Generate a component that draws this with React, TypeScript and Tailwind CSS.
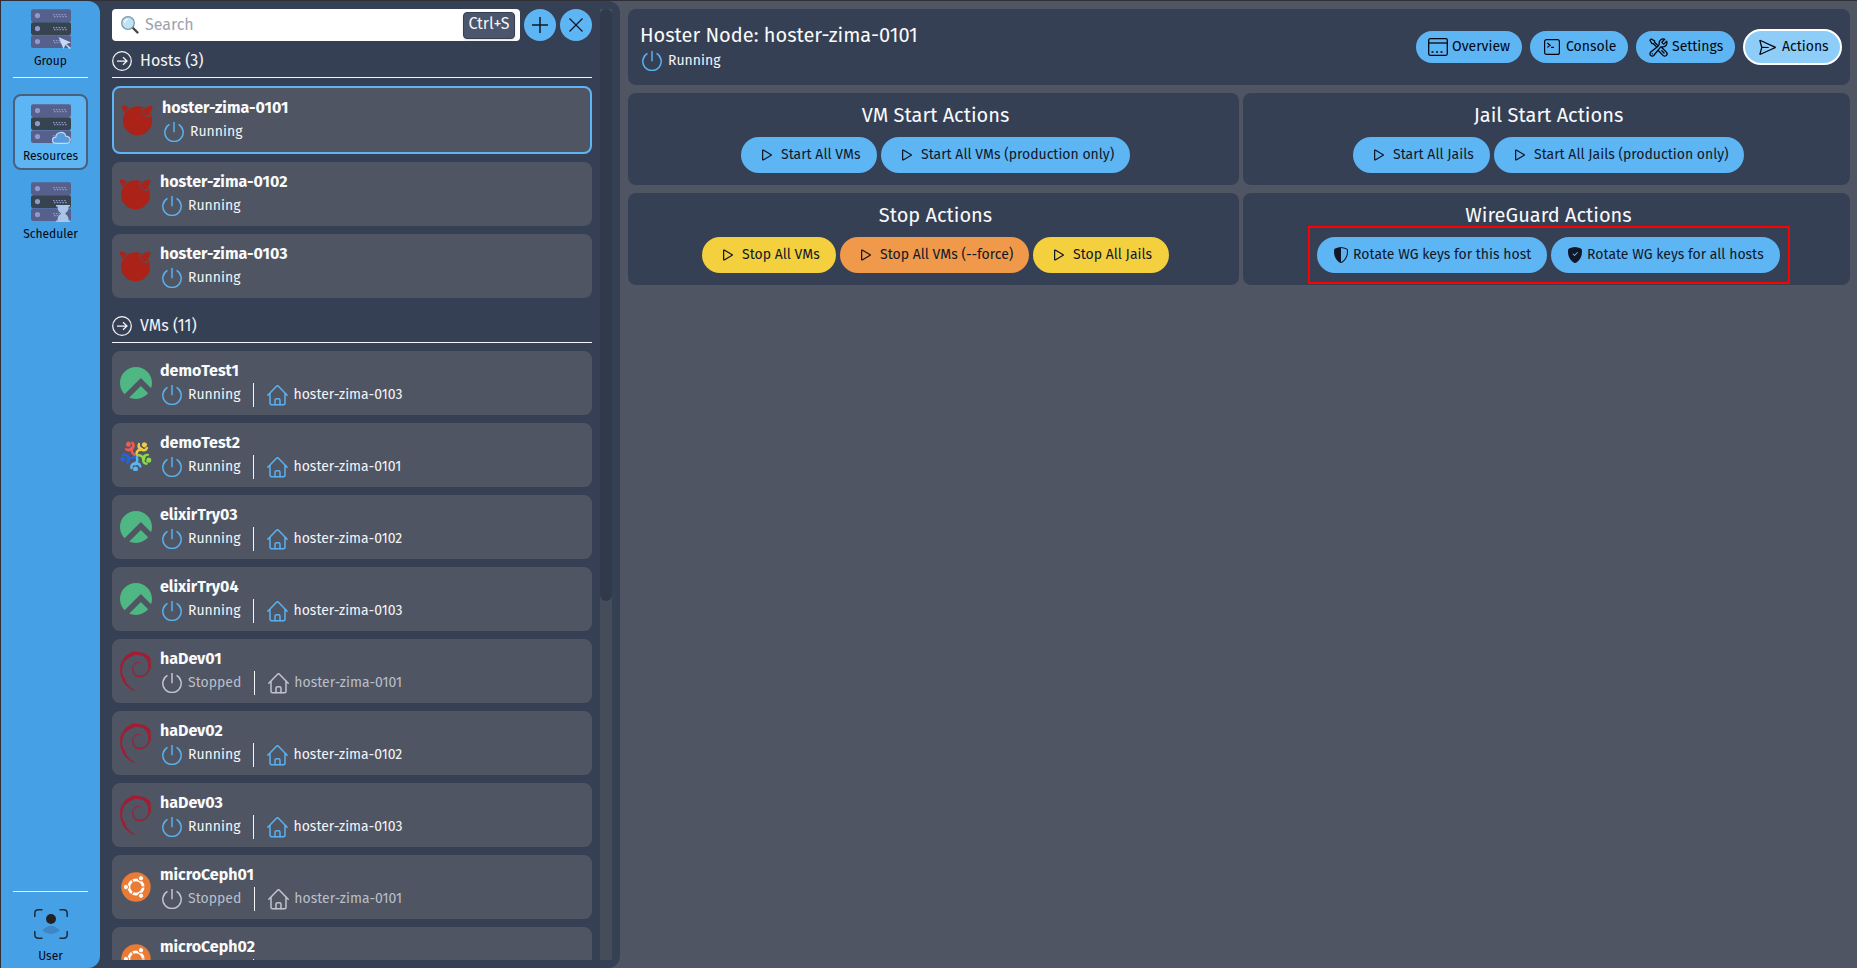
import React, { ReactNode } from "react";
import { HiOutlineWrenchScrewdriver } from "react-icons/hi2";
import { SiDebian, SiFreebsd, SiRockylinux } from "react-icons/si";
import { BsShieldFillCheck, BsShieldShaded, BsPlay } from "react-icons/bs";
import { VscSend } from "react-icons/vsc";

type IconProps = { className?: string };

const Power = ({ className = "" }: IconProps) => (
  <svg viewBox="0 0 20 20" className={className} fill="none" stroke="currentColor" strokeWidth="1.5">
    <path d="M10 0v10.2" />
    <path d="M5.500 2.300A9.200 9.200 0 1 0 14.500 2.300" />
  </svg>
);

const Home = ({ className = "" }: IconProps) => (
  <svg viewBox="0 0 21 21" className={className} fill="none" stroke="currentColor" strokeWidth="1.5" strokeLinecap="round" strokeLinejoin="round">
    <path d="M.8 10.300 9.6 1.200q.9-.9 1.8 0l8.800 9.100M3 8.700v9.600q0 1.500 1.500 1.500h12q1.500 0 1.500-1.500V8.700" />
    <path d="M8 19.700v-4.400q0-1.500 1.500-1.500h2q1.500 0 1.500 1.500v4.400" />
  </svg>
);

const swirl = [
  { color: "#efcb3f", angle: 36 },
  { color: "#8dd94b", angle: 108 },
  { color: "#5cb5f2", angle: 180 },
  { color: "#2a63d4", angle: 252 },
  { color: "#ec5a50", angle: 324 },
];

const AlmaLinux = ({ className = "" }: IconProps) => (
  <svg viewBox="0 0 32 32" className={className}>
    {swirl.map((s) => (
      <g key={s.color} transform={`rotate(${s.angle} 16 16.5)`}>
        <path d="M15.500 15.200C14 12.500 14.500 9.700 17.500 8.500 20.500 7.700 20.900 6 20.500 4" fill="none" stroke={s.color} strokeWidth="2.500" strokeLinecap="round" />
        <path d="M10.500 4.500C10.500 9 14.500 11.500 19 8.800L17.500 6.300C15 7.500 13 7 12.300 4.300z" fill={s.color} />
        <circle cx="16.500" cy="2.900" r="2.500" fill={s.color} />
      </g>
    ))}
  </svg>
);

const Ubuntu = ({ className = "" }: IconProps) => (
  <svg viewBox="0 0 30 30" className={className}>
    <circle cx="15" cy="15" r="14.7" fill="#e97b35" />
    <circle cx="15" cy="15" r="7.2" fill="none" stroke="#fff" strokeWidth="2.8" />
    {[0, 120, 240].map((a) => (
      <g key={a} transform={`rotate(${a} 15 15)`}>
        <path d="M24.500 15H19" stroke="#e97b35" strokeWidth="1.2" />
        <circle cx="4.900" cy="15" r="2.600" fill="#fff" stroke="#e97b35" strokeWidth="1" />
      </g>
    ))}
  </svg>
);

const Freebsd = ({ className = "" }: IconProps) => <SiFreebsd className={`text-[#ab2318] ${className}`} />;
const Rocky = ({ className = "" }: IconProps) => <SiRockylinux className={`text-[#4fb783] ${className}`} />;
const Debian = ({ className = "" }: IconProps) => <SiDebian className={`text-[#a11d33] ${className}`} />;

const ArrowCircle = () => (
  <svg viewBox="0 0 20 20" className="size-5 shrink-0" fill="none" stroke="currentColor" strokeWidth="1.25">
    <circle cx="10" cy="10" r="9.300" />
    <path d="M5 10h9.500M11 6.300l4 3.700-4 3.700" />
  </svg>
);

type Badge = "cursor" | "cloud" | "hourglass";

const Servers = ({ badge }: { badge: Badge }) => (
  <svg viewBox="0 0 40 40" className="size-10">
    {[0, 13, 26].map((y, i) => (
      <g key={y}>
        <rect x="0" y={y + 0.2} width="40" height="12.900" rx="2" fill={i === 1 ? "#37434e" : "#56608a"} />
        <circle cx="6.500" cy={y + 6.600} r="2.600" fill="#9098d2" />
        <path d={`M22 ${y + 5.600}h14M23 ${y + 7.600}h13`} stroke="#9098d2" strokeWidth="1.300" strokeDasharray="1.500 1.300" />
      </g>
    ))}
    {badge === "cursor" && <path d="M27.500 28 40 33.400l-4.700 1.700 4.700 4-1.500 1-4-4.300-2 4.200z" fill="#c3d9f5" />}
    {badge === "cloud" && (
      <path d="M24.500 39.300c-4.300-.5-3.800-6.300.3-6.200.5-5.500 8.500-6.500 10-.9 5.800.5 5.600 6.900.8 7.100z" fill="#559bdd" stroke="#c3d9f5" strokeWidth="1.200" />
    )}
    {badge === "hourglass" && (
      <path d="M25 23h14v1.500H25zM25 38.500h14V40H25zM26.500 24.500h11.200c0 4-1.700 5.500-4 7 2.300 1.500 4 3 4 7H26.500c0-4 1.700-5.500 4-7-2.300-1.500-4-3-4-7z" fill="#a9c5e8" />
    )}
  </svg>
);

const UserFrame = () => (
  <svg viewBox="0 0 34 30" className="h-[30px] w-[34px]">
    <path d="M.8 8V4.500Q.8.800 4.500.800H8.500M25.500.800h4q3.700 0 3.700 3.700V8M33.200 22v3.500q0 3.700-3.700 3.700h-4M8.500 29.200h-4Q.8 29.200.8 25.500V22" fill="none" stroke="#1e2a3a" strokeWidth="1.500" />
    <circle cx="17" cy="10" r="5" fill="#222" />
    <path d="M8 21.500q9-9.500 18 0-9 7-18 0z" fill="#3e87c4" />
  </svg>
);

const Status = ({ stopped }: { stopped?: boolean }) => (
  <div className="flex h-6 items-center gap-1.5 pl-0.5">
    <Power className={`size-5 ${stopped ? "text-[#bfc4cd]" : "text-[#5bb0ee]"}`} />
    <span className={`text-sm/5 ${stopped ? "text-[#b9bfca]" : "text-gray-100"}`}>{stopped ? "Stopped" : "Running"}</span>
  </div>
);

const osIcons = { freebsd: Freebsd, rocky: Rocky, alma: AlmaLinux, debian: Debian, ubuntu: Ubuntu };
type Os = keyof typeof osIcons;
const osSizes: Record<Os, string> = {
  freebsd: "size-[33px]",
  rocky: "size-8",
  alma: "size-8",
  debian: "size-10",
  ubuntu: "size-[30px]",
};

type Machine = { name: string; os: Os; host?: string; stopped?: boolean; selected?: boolean };

const hosts: Machine[] = [
  { name: "hoster-zima-0101", os: "freebsd", selected: true },
  { name: "hoster-zima-0102", os: "freebsd" },
  { name: "hoster-zima-0103", os: "freebsd" },
];

const vms: Machine[] = [
  { name: "demoTest1", os: "rocky", host: "hoster-zima-0103" },
  { name: "demoTest2", os: "alma", host: "hoster-zima-0101" },
  { name: "elixirTry03", os: "rocky", host: "hoster-zima-0102" },
  { name: "elixirTry04", os: "rocky", host: "hoster-zima-0103" },
  { name: "haDev01", os: "debian", host: "hoster-zima-0101", stopped: true },
  { name: "haDev02", os: "debian", host: "hoster-zima-0102" },
  { name: "haDev03", os: "debian", host: "hoster-zima-0103" },
  { name: "microCeph01", os: "ubuntu", host: "hoster-zima-0101", stopped: true },
];

const Card = ({ m }: { m: Machine }) => {
  const Os = osIcons[m.os];
  return (
    <div className={`flex shrink-0 items-center rounded-lg bg-[#4f5563] px-2 ${m.selected ? "h-[68px] border-2 border-[#5eb5f4]" : "h-16"}`}>
      <div className="flex w-8 justify-center">
        <Os className={`shrink-0 ${osSizes[m.os]}`} />
      </div>
      <div className="ml-2 flex flex-col">
        <div className="h-6 text-base/6 font-bold text-gray-50">{m.name}</div>
        <div className="flex h-6 items-center">
          <Status stopped={m.stopped} />
          {m.host && (
            <>
              <div className="ml-[13px] h-6 w-px bg-gray-100" />
              <Home className={`ml-[13px] size-[21px] ${m.stopped ? "text-[#bfc4cd]" : "text-[#5bb0ee]"}`} />
              <span className={`ml-[5px] text-sm/5 ${m.stopped ? "text-[#b9bfca]" : "text-gray-100"}`}>{m.host}</span>
            </>
          )}
        </div>
      </div>
    </div>
  );
};

const SectionHead = ({ children }: { children: ReactNode }) => (
  <div className="flex h-[37px] shrink-0 items-center gap-2 border-b border-gray-100 pt-1 text-base text-gray-100">
    <ArrowCircle />
    {children}
  </div>
);

const NavItem = ({ badge, label, active }: { badge: Badge; label: string; active?: boolean }) => (
  <div className={`flex h-[76px] w-[75px] flex-col items-center rounded-lg border-2 pt-2 text-xs/4 text-gray-950 ${active ? "border-[#4a5f7c] bg-[#5eb5f4]" : "border-transparent"}`}>
    <Servers badge={badge} />
    <span className="mt-1">{label}</span>
  </div>
);

const Tab = ({ icon, label, active, className }: { icon: ReactNode; label: string; active?: boolean; className: string }) => (
  <button className={`flex items-center rounded-full text-sm text-gray-950 ${active ? "h-9 border-2 border-white bg-[#8ecdf8]" : "h-8 bg-[#5eb5f4]"} ${className}`}>
    {icon}
    {label}
  </button>
);

const Action = ({ tone = "bg-[#5eb5f4]", width, shield, children }: { tone?: string; width: string; shield?: "half" | "full"; children: ReactNode }) => (
  <button className={`flex h-9 items-center gap-1 rounded-full pl-4 text-sm whitespace-nowrap text-gray-900 ${tone} ${width}`}>
    {shield === "half" && <BsShieldShaded className="size-4 shrink-0" />}
    {shield === "full" && <BsShieldFillCheck className="size-4 shrink-0" />}
    {!shield && <BsPlay className="size-5 shrink-0" />}
    {children}
  </button>
);

const Panel = ({ title, children }: { title: string; children: ReactNode }) => (
  <section className="flex h-[92px] flex-col items-center rounded-lg bg-[#364055] pt-2 pl-1">
    <h2 className="h-7 text-xl/7 text-gray-50">{title}</h2>
    <div className="mt-2 flex gap-1">{children}</div>
  </section>
);

export default function App() {
  return (
    <div className="flex h-[968px] w-[1857px] overflow-hidden border-t border-l border-[#2f3036] bg-[#4f5563] font-['Fira_Sans','Noto_Sans',sans-serif]">
      <aside className="flex h-[967px] w-[619px] shrink-0 rounded-tr-xl rounded-br-xl bg-[#364055]">
        <nav className="flex w-[99px] shrink-0 flex-col items-center rounded-r-xl bg-[#46a0e6]">
          <div className="-mt-0.5 h-[76px]">
            <NavItem badge="cursor" label="Group" />
          </div>
          <div className="mt-0.5 h-px w-[75px] bg-gray-100" />
          <div className="mt-4">
            <NavItem badge="cloud" label="Resources" active />
          </div>
          <div className="mt-0.5">
            <NavItem badge="hourglass" label="Scheduler" />
          </div>
          <div className="mt-auto h-px w-[75px] bg-gray-100" />
          <div className="mt-[17px] mb-1 flex h-[55px] flex-col items-center text-xs/4 text-gray-950">
            <UserFrame />
            <span className="mt-[9px]">User</span>
          </div>
        </nav>
        <div className="flex h-[959px] w-[492px] flex-col pt-2 pl-3">
          <div className="flex h-8 w-[480px] shrink-0 gap-1">
            <div className="flex h-8 w-[408px] items-center rounded bg-white pr-[5px] pl-2">
              <svg viewBox="0 0 20 20" className="size-5">
                <path d="m12 12 5.500 5.500" stroke="#454545" strokeWidth="2.400" strokeLinecap="round" />
                <circle cx="8" cy="8" r="6.300" fill="#bfe3f5" stroke="#7d9aa6" strokeWidth="1.300" />
                <path d="M4.500 8a3.500 3.500 0 0 1 3.500-3.500" stroke="#fff" strokeWidth="1.200" fill="none" />
              </svg>
              <span className="ml-[5px] text-base text-[#9ca3af]">Search</span>
              <kbd className="ml-auto flex h-[27px] w-[52px] items-center justify-center rounded border border-[#364055] bg-[#4b556b] pb-0.5 font-['Fira_Sans','Noto_Sans',sans-serif] text-base text-gray-100 shadow">Ctrl+S</kbd>
            </div>
            <button className="flex size-8 items-center justify-center rounded-full bg-[#5eb5f4]">
              <svg viewBox="0 0 16 16" className="size-4" stroke="#111827" strokeWidth="1.500"><path d="M8 0v16M0 8h16" /></svg>
            </button>
            <button className="flex size-8 items-center justify-center rounded-full bg-[#5eb5f4]">
              <svg viewBox="0 0 16 16" className="size-4" stroke="#111827" strokeWidth="1.300"><path d="m1.500 1.500 13 13m0-13-13 13" /></svg>
            </button>
          </div>
          <SectionHead>Hosts (3)</SectionHead>
          <div className="mt-2 flex flex-col gap-2">
            {hosts.map((m) => <Card key={m.name} m={m} />)}
          </div>
          <div className="mt-2">
            <SectionHead>VMs (11)</SectionHead>
          </div>
          <div className="mt-2 flex flex-col gap-2">
            {vms.map((m) => <Card key={m.name} m={m} />)}
            <div className="flex h-[33px] overflow-hidden rounded-t-lg bg-[#4f5563] pt-2 pl-2">
              <div className="flex w-8 justify-center pt-[9px]">
                <Ubuntu className="size-[30px] shrink-0" />
              </div>
              <div className="ml-2">
                <div className="h-6 text-base/6 font-bold text-gray-50">microCeph02</div>
                <div className="ml-[93px] h-6 w-px bg-gray-100" />
              </div>
            </div>
          </div>
        </div>
        <div className="mt-2 ml-2 h-[951px] w-3 bg-[#454d5b]">
          <div className="h-[592px] rounded-md bg-[#303a4a]" />
        </div>
      </aside>
      <main className="flex w-[1230px] flex-col gap-2 pt-2 pl-2">
        <header className="flex h-[76px] items-center justify-between rounded-lg bg-[#364055] pr-2 pl-3">
          <div>
            <h1 className="h-7 text-xl/7 text-gray-50">Hoster Node: hoster-zima-0101</h1>
            <Status />
          </div>
          <div className="flex items-center gap-2">
            <Tab
              className="w-[106px] gap-1 pl-3"
              label="Overview"
              icon={
                <svg viewBox="0 0 20 18" className="h-[18px] w-5" fill="none" stroke="currentColor" strokeWidth="1.300">
                  <rect x=".700" y=".700" width="18.600" height="16.600" rx="1.500" />
                  <path d="M1 5h18" />
                  <path d="M3.500 14h2m2.500 0h2m2.500 0h2" strokeWidth="1.700" />
                </svg>
              }
            />
            <Tab
              className="w-[98px] gap-1.5 pl-3.5"
              label="Console"
              icon={
                <svg viewBox="0 0 16 16" className="size-4" fill="none" stroke="currentColor" strokeWidth="1.200">
                  <rect x=".600" y=".600" width="14.800" height="14.800" rx="2" />
                  <path d="m3.300 4 2.800 2.200-2.800 2.200M7 8.300h3" />
                </svg>
              }
            />
            <Tab className="w-[99px] gap-[3px] pl-3" label="Settings" icon={<HiOutlineWrenchScrewdriver className="size-[21px]" />} />
            <Tab active className="w-[99px] gap-[5px] pl-[13px]" label="Actions" icon={<VscSend className="size-[19px]" />} />
          </div>
        </header>
        <div className="grid grid-cols-[611px_607px] gap-x-1 gap-y-2">
          <Panel title="VM Start Actions">
            <Action width="w-[136px]">Start All VMs</Action>
            <Action width="w-[249px]">Start All VMs (production only)</Action>
          </Panel>
          <Panel title="Jail Start Actions">
            <Action width="w-[137px]">Start All Jails</Action>
            <Action width="w-[250px]">Start All Jails (production only)</Action>
          </Panel>
          <Panel title="Stop Actions">
            <Action width="w-[134px]" tone="bg-[#f4d03f]">Stop All VMs</Action>
            <Action width="w-[189px]" tone="bg-[#f0994a]">Stop All VMs (--force)</Action>
            <Action width="w-[136px]" tone="bg-[#f4d03f]">Stop All Jails</Action>
          </Panel>
          <div className="relative">
            <Panel title="WireGuard Actions">
              <Action width="w-[230px]" shield="half">Rotate WG keys for this host</Action>
              <Action width="w-[229px]" shield="full">Rotate WG keys for all hosts</Action>
            </Panel>
            <div className="absolute top-[33px] left-[65px] h-[58px] w-[482px] border-2 border-[#ff0000]" />
          </div>
        </div>
      </main>
    </div>
  );
}
